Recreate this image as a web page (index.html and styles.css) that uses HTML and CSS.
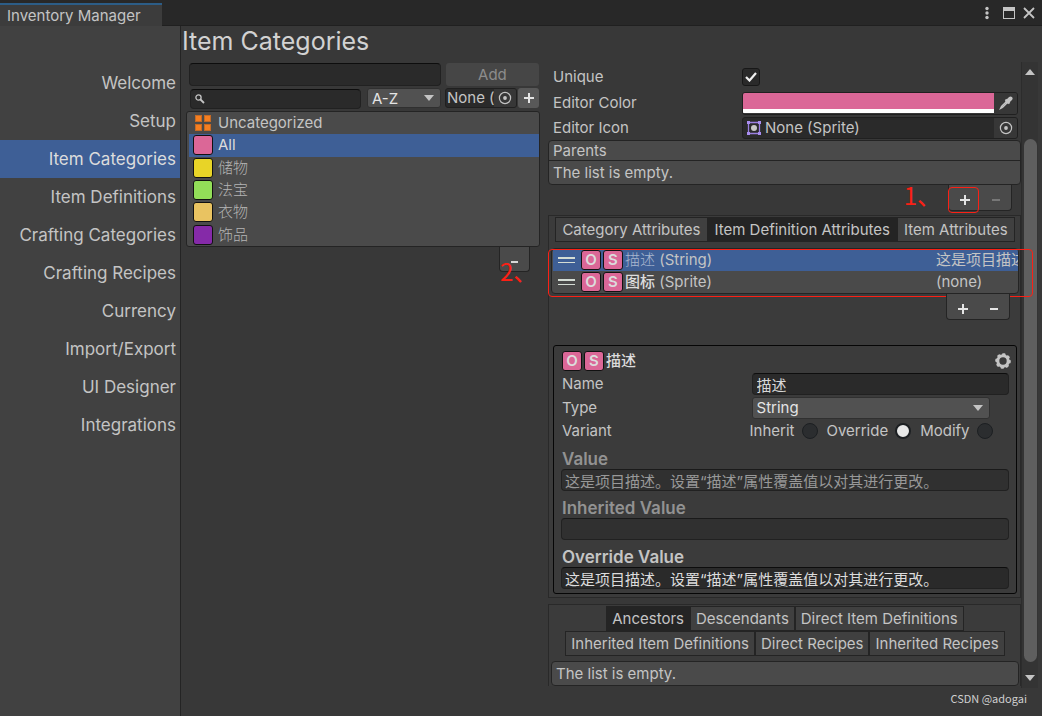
FILE: index.html
```html
<!DOCTYPE html>
<html lang="en">
<head>
<meta charset="utf-8">
<title>Inventory Manager</title>
<link rel="stylesheet" href="styles.css">
</head>
<body>
<header class="titlebar">
  <div class="window-tab">Inventory Manager</div>
  <div class="window-controls">
    <button class="icon-btn menu" aria-label="Menu"><svg width="6" height="14" viewBox="0 0 6 14"><g fill="#c4c4c4"><circle cx="3" cy="2.500" r="1.700"/><circle cx="3" cy="7" r="1.700"/><circle cx="3" cy="11.500" r="1.700"/></g></svg></button>
    <button class="icon-btn" aria-label="Maximize"><svg width="12" height="12" viewBox="0 0 12 12"><path d="M0 0h12v12H0zM1 4v7h10V4z" fill="#c4c4c4" fill-rule="evenodd"/></svg></button>
    <button class="icon-btn" aria-label="Close"><svg width="12" height="12" viewBox="0 0 12 12"><path d="M1 1l10 10M11 1L1 11" stroke="#c4c4c4" stroke-width="1.800"/></svg></button>
  </div>
</header>
<div class="body">
  <nav class="sidebar">
    <a href="#welcome">Welcome</a>
    <a href="#setup">Setup</a>
    <a href="#categories" class="active">Item Categories</a>
    <a href="#definitions">Item Definitions</a>
    <a href="#crafting-categories">Crafting Categories</a>
    <a href="#recipes">Crafting Recipes</a>
    <a href="#currency">Currency</a>
    <a href="#import">Import/Export</a>
    <a href="#ui">UI Designer</a>
    <a href="#integrations">Integrations</a>
  </nav>
  <main class="main">
    <h1>Item Categories</h1>
    <div class="columns">
      <section class="browser">
        <div class="add-row">
          <input class="field" type="text" aria-label="New category name">
          <button class="btn-add" disabled>Add</button>
        </div>
        <div class="search-row">
          <label class="search field">
            <svg width="10" height="10" viewBox="0 0 10 10"><circle cx="3.500" cy="3.500" r="2.600" fill="none" stroke="#c4c4c4" stroke-width="1.300"/><path d="M5.500 5.500L9 9" stroke="#c4c4c4" stroke-width="1.800"/></svg>
            <input type="search" aria-label="Search">
          </label>
          <div class="select"><select aria-label="Sort"><option>A-Z</option></select></div>
          <div class="object-field small"><span>None (</span><button class="picker" aria-label="Pick object"><svg width="14" height="14" viewBox="0 0 14 14"><circle cx="7" cy="7" r="5.600" fill="none" stroke="#c4c4c4" stroke-width="1.200"/><circle cx="7" cy="7" r="1.900" fill="#c4c4c4"/></svg></button></div>
          <button class="btn-plus" aria-label="Add filter"><svg width="10" height="10" viewBox="0 0 10 10"><path d="M5 0v10M0 5h10" stroke="#e4e4e4" stroke-width="2"/></svg></button>
        </div>
        <ul class="category-list">
          <li><button><svg class="grid-icon" width="16" height="16" viewBox="0 0 16 16"><path d="M0 0h7v7H0zM9 0h7v7H9zM0 9h7v7H0zM9 9h7v7H9z" fill="#c46a26"/><path d="M1 1h5v5H1zM10 1h5v5h-5zM1 10h5v5H1zM10 10h5v5h-5z" fill="#f57e20"/></svg>Uncategorized</button></li>
          <li class="selected"><button><i class="swatch pink"></i>All</button></li>
          <li class="dim"><button><i class="swatch yellow"></i>储物</button></li>
          <li class="dim"><button><i class="swatch green"></i>法宝</button></li>
          <li class="dim"><button><i class="swatch sand"></i>衣物</button></li>
          <li class="dim"><button><i class="swatch purple"></i>饰品</button></li>
        </ul>
        <div class="list-footer single">
          <button aria-label="Remove category"><svg width="10" height="10" viewBox="0 0 10 10"><path d="M1 5h7" stroke="#d8d8d8" stroke-width="2"/></svg></button>
          <span class="note note-two">2、</span>
        </div>
      </section>

      <section class="inspector">
        <div class="prop unique"><label for="unique">Unique</label><span class="check"><input id="unique" type="checkbox" checked><svg width="12" height="10" viewBox="0 0 12 10"><path d="M1 5l3.500 3.500L11 1" fill="none" stroke="#f0f0f0" stroke-width="2.200"/></svg></span></div>
        <div class="prop color"><label for="color">Editor Color</label><div class="color-field"><input id="color" type="color" value="#db6797"><button class="picker" aria-label="Eyedropper"><svg width="14" height="14" viewBox="0 0 14 14"><path d="M8 5L2.500 10.500 1.500 12.500 3.500 11.500 9 6" fill="none" stroke="#c4c4c4" stroke-width="1.300"/><path d="M6.500 3.500l4 4" stroke="#c4c4c4" stroke-width="2"/><path d="M8.500 5.500l3-3" stroke="#c4c4c4" stroke-width="4" stroke-linecap="round"/></svg></button></div></div>
        <div class="prop icon"><span>Editor Icon</span><div class="object-field"><svg class="sprite" width="14" height="14" viewBox="0 0 14 14"><path d="M1.500 1.500h11v11h-11z" fill="none" stroke="#9a7fe0" stroke-width="1.300"/><path d="M0 0h3v3H0zM11 0h3v3h-3zM0 11h3v3H0zM11 11h3v3h-3z" fill="#a98df0"/><circle cx="7" cy="7" r="3" fill="#c8c8c8"/></svg><span>None (Sprite)</span><button class="picker" aria-label="Pick sprite"><svg width="14" height="14" viewBox="0 0 14 14"><circle cx="7" cy="7" r="5.600" fill="none" stroke="#c4c4c4" stroke-width="1.200"/><circle cx="7" cy="7" r="1.900" fill="#c4c4c4"/></svg></button></div></div>
        <div class="list-box parents"><h2>Parents</h2><p>The list is empty.</p></div>
        <div class="list-footer">
          <button aria-label="Add parent"><svg width="12" height="12" viewBox="0 0 12 12"><path d="M6 1v10M1 6h10" stroke="#e4e4e4" stroke-width="2"/></svg></button>
          <button aria-label="Remove parent" disabled><svg width="12" height="12" viewBox="0 0 12 12"><path d="M2 6h8" stroke="#777" stroke-width="2"/></svg></button>
          <span class="note note-one">1、</span><span class="mark mark-plus"></span>
        </div>

        <div class="panel attributes">
          <div class="tabs">
            <button>Category Attributes</button><button class="on">Item Definition Attributes</button><button>Item Attributes</button>
          </div>
          <div class="attr-wrap">
            <ul class="attr-list">
              <li class="selected"><span class="handle"></span><b class="badge">O</b><b class="badge">S</b><span class="attr-name"><span class="faint">描述</span> (String)</span><span class="attr-value">这是项目描述</span></li>
              <li><span class="handle"></span><b class="badge">O</b><b class="badge">S</b><span class="attr-name"><strong>图标</strong> (Sprite)</span><span class="attr-value">(none)</span></li>
            </ul>
            <span class="mark mark-list"></span>
          </div>
          <div class="list-footer">
            <button aria-label="Add attribute"><svg width="12" height="12" viewBox="0 0 12 12"><path d="M6 1v10M1 6h10" stroke="#e4e4e4" stroke-width="2"/></svg></button>
            <button aria-label="Remove attribute"><svg width="12" height="12" viewBox="0 0 12 12"><path d="M2 6h8" stroke="#e4e4e4" stroke-width="2"/></svg></button>
          </div>
          <div class="detail">
            <div class="detail-head"><b class="badge">O</b><b class="badge">S</b><span class="detail-title">描述</span>
              <button class="icon-btn" aria-label="Options"><svg width="16" height="16" viewBox="0 0 16 16"><circle cx="8" cy="8" r="5.200" fill="none" stroke="#c4c4c4" stroke-width="3"/><circle cx="8" cy="8" r="6.600" fill="none" stroke="#c4c4c4" stroke-width="2.400" stroke-linecap="round" stroke-dasharray="1.200 3.983"/></svg></button></div>
            <div class="detail-row"><label for="name">Name</label><input id="name" class="field" type="text" value="描述"></div>
            <div class="detail-row type"><label for="type">Type</label><div class="select"><select id="type"><option>String</option></select></div></div>
            <div class="detail-row variant"><span>Variant</span><div class="radios"><label>Inherit<input type="radio" name="variant"></label><label>Override<input type="radio" name="variant" checked></label><label>Modify<input type="radio" name="variant"></label></div></div>
            <div class="value-group off"><label for="value">Value</label><input id="value" class="field" type="text" disabled value="这是项目描述。设置“描述”属性覆盖值以对其进行更改。"></div>
            <div class="value-group off"><label for="inherited">Inherited Value</label><input id="inherited" class="field" type="text" disabled></div>
            <div class="value-group"><label for="override">Override Value</label><input id="override" class="field" type="text" value="这是项目描述。设置“描述”属性覆盖值以对其进行更改。"></div>
          </div>
        </div>

        <div class="panel relations">
          <div class="tabs"><button class="on">Ancestors</button><button>Descendants</button><button>Direct Item Definitions</button></div>
          <div class="tabs"><button>Inherited Item Definitions</button><button>Direct Recipes</button><button>Inherited Recipes</button></div>
          <div class="list-box"><p>The list is empty.</p></div>
        </div>
      </section>

      <div class="scrollbar">
        <button aria-label="Scroll up"><svg width="10" height="6" viewBox="0 0 10 6"><path d="M5 0l5 6H0z" fill="#c4c4c4"/></svg></button>
        <div class="thumb"></div>
        <button aria-label="Scroll down"><svg width="10" height="6" viewBox="0 0 10 6"><path d="M5 6l5-6H0z" fill="#c4c4c4"/></svg></button>
      </div>
    </div>
    <footer class="credit">CSDN @adogai</footer>
  </main>
</div>
</body>
</html>
```

FILE: styles.css
```css
* { box-sizing: border-box; }
body {
  margin: 0;
  min-height: 100vh;
  display: flex;
  flex-direction: column;
  background: #383838;
  color: #c4c4c4;
  font: 15px/20px Inter, "Noto Sans CJK SC", sans-serif;
}
button, input, select { font: inherit; color: inherit; margin: 0; padding: 0; border: 0; background: none; min-width: 0; }
svg { display: block; flex: none; }
h1, h2, p, ul { margin: 0; padding: 0; font-weight: 400; }
ul { list-style: none; }

.titlebar { display: flex; justify-content: space-between; height: 26px; background: #282828; border-bottom: 1px solid #202020; padding-top: 3px; }
.window-tab { height: 23px; border-top: 2px solid #2c5d87; background: #3c3c3c; padding: 1px 21px 0 7px; }
.window-controls { display: flex; align-items: center; gap: 8px; padding: 0 7px 2px 0; }
.icon-btn { padding: 0; }
.menu { margin-right: 5px; }

.body { flex: 1; display: flex; }
.sidebar { width: 181px; flex: none; padding-top: 38px; background: #414141; border-right: 1px solid #242424; font-size: 17px; }
.sidebar a { display: block; height: 38px; line-height: 39px; padding-right: 4px; text-align: right; color: inherit; text-decoration: none; white-space: nowrap; }
.sidebar .active { background: #3e5f96; color: #dcdcdc; }

.main { flex: 1; min-width: 0; display: flex; flex-direction: column; }
h1 { height: 36px; line-height: 31px; font-size: 25px; padding-left: 1px; color: #d2d2d2; }
.columns { flex: 1; display: grid; grid-template-columns: minmax(0, 354fr) minmax(0, 481fr) 17px; padding: 0 4px 0 5px; }

.field { background: #2a2a2a; border: 1px solid #212121; border-top-color: #0d0d0d; border-radius: 4px; }
.add-row { display: flex; gap: 5px; padding: 1px 1px 0 3px; }
.add-row .field { flex: 252; height: 23px; }
.btn-add { flex: 94; height: 23px; background: #464646; border-radius: 3px; color: #8c8c8c; }
.search-row { display: flex; padding: 2px 1px 0 4px; height: 24px; margin-bottom: 1px; }
.search { flex: 1; min-width: 0; height: 20px; margin: 1px 6px 0 0; display: flex; align-items: center; gap: 4px; padding: 0 4px; }
.search input { flex: 1; outline: 0; }
.select { position: relative; height: 20px; background: #515151; border: 1px solid #303030; border-radius: 3px; color: #e4e4e4; }
.search-row .select { width: 74px; margin-right: 4px; }
.select select { appearance: none; width: 100%; height: 100%; padding-left: 4px; display: block; }
.select::after { content: ""; position: absolute; right: 6px; top: 50%; margin-top: -3px; border: 5px solid transparent; border-top: 6px solid #c4c4c4; border-bottom: 0; pointer-events: none; }
.object-field { display: flex; align-items: center; background: #2a2a2a; border: 1px solid #202020; border-radius: 3px; overflow: hidden; white-space: nowrap; }
.object-field > span { flex: 1; }
.object-field.small { width: 72px; height: 20px; margin-right: 1px; }
.object-field.small > span { overflow: hidden; padding-left: 1px; }
.picker { align-self: stretch; width: 22px; display: grid; place-items: center; background: #373737; flex: none; }
.btn-plus { width: 21px; height: 20px; background: #585858; border-radius: 3px; display: grid; place-items: center; }

.category-list { display: grid; grid-auto-rows: 1fr; height: 136px; background: #4a4a4a; border: 1px solid #242424; border-radius: 3px; padding-left: 2px; overflow: hidden; }
.category-list button { width: 100%; height: 100%; display: flex; align-items: center; gap: 5px; padding-left: 4px; text-align: left; }
.category-list .selected { background: #3e5f96; color: #dcdcdc; }
.dim { color: #b4b4b4; font-weight: 300; }
.grid-icon { margin: 0 2px; }
.swatch { width: 20px; height: 20px; border: 1px solid #111; border-radius: 3px; }
.pink { background: #db6797; }
.yellow { background: #e8d427; }
.green { background: #92de58; }
.sand { background: #e9c361; }
.purple { background: #852aa8; }

.list-footer { position: relative; width: 64px; height: 26px; margin: 0 9px 0 auto; display: flex; background: #4a4a4a; border: 1px solid #242424; border-top: 0; border-radius: 0 0 4px 4px; }
.list-footer button { flex: 1; display: grid; place-items: center; padding-top: 5px; }
.list-footer.single { width: 31px; height: 25px; margin-right: 10px; }
.note { position: absolute; color: #fb2015; font: 24px/24px "Noto Sans CJK SC", sans-serif; white-space: nowrap; }
.note-one { right: 70px; top: -2px; }
.note-two { left: 0; top: 12px; }
.mark { position: absolute; border: 1px solid #fb2015; border-radius: 4px; pointer-events: none; }
.mark-plus { left: -1px; top: 2px; width: 31px; height: 26px; }
.mark-list { left: -3px; right: -14px; top: 1px; bottom: -3px; }

.inspector { padding-left: 8px; }
.prop { display: grid; grid-template-columns: 189fr 276fr; padding: 0 3px 0 5px; align-items: center; }
.unique { height: 29px; }
.color { height: 24px; }
.icon { height: 25px; }
.check { position: relative; width: 18px; height: 18px; }
.check input { appearance: none; display: block; width: 18px; height: 18px; background: #2a2a2a; border: 1px solid #181818; border-radius: 3px; }
.check svg { position: absolute; left: 3px; top: 4px; pointer-events: none; }
.color-field { display: flex; height: 23px; border: 1px solid #202020; border-radius: 3px; overflow: hidden; }
.color-field input { appearance: none; flex: 1; height: 20px; border-bottom: 4px solid #fff; }
.color-field input::-webkit-color-swatch-wrapper { padding: 0; }
.color-field input::-webkit-color-swatch { border: 0; }
.color-field .picker, .icon .picker { width: 23px; }
.icon .object-field { height: 22px; }
.sprite { margin: 0 4px; }

.list-box { background: #4a4a4a; border: 1px solid #242424; border-radius: 4px; }
.list-box h2 { font-size: 15px; height: 20px; border-bottom: 1px solid #242424; padding-left: 4px; line-height: 20px; }
.list-box p { height: 23px; line-height: 23px; padding-left: 4px; }

.panel { border: 1px solid #292929; background: #3b3b3b; }
.attributes { margin-top: 4px; padding: 1px 1px 3px 2px; }
.tabs { display: flex; justify-content: center; }
.tabs button { height: 25px; padding: 0 5px; border: 1px solid #242424; white-space: nowrap; background: #404040; }
.attributes .tabs button { padding: 0 6px; }
.tabs .on { background: #242424; }
.attr-wrap { position: relative; margin-top: 6px; }
.attr-list { background: #4a4a4a; border: 1px solid #242424; border-radius: 4px; overflow: hidden; }
.attr-list li { display: flex; align-items: center; height: 22px; padding-left: 5px; white-space: nowrap; overflow: hidden; margin-left: 1px; }
.attr-list .selected { background: #3e5f96; }
.handle { width: 17px; height: 6px; border: 2px solid #d4dcd4; border-width: 2px 0 1px; margin-right: 6px; flex: none; }
.badge { flex: none; width: 20px; height: 20px; margin-right: 2px; border: 1px solid #111; border-radius: 3px; background: #db6797; color: #dcdcdc; text-align: center; line-height: 18px; font-weight: 600; }
.attr-name { flex: 1; }
.attr-value { flex: none; width: 82px; }
.faint { color: #a9b7cf; font-weight: 300; }
strong { font-weight: 500; color: #dcdcdc; }

.detail { margin: 25px 2px 0 2px; border: 1px solid #060606; border-radius: 3px; padding: 4px 7px; }
.detail-head { display: flex; align-items: center; height: 22px; padding-left: 1px; }
.detail-title { flex: 1; color: #dcdcdc; font-weight: 500; }
.detail-head .icon-btn { margin-right: -2px; }
.detail-row { display: grid; grid-template-columns: 190fr 258fr; align-items: center; height: 24px; padding-left: 1px; }
.detail-row .field { height: 22px; padding-left: 4px; color: #d8d8d8; }
.type .select { height: 22px; margin-right: 19px; }
.variant { height: 22px; }
.radios { display: flex; gap: 9px; white-space: nowrap; margin-left: -2px; }
.radios label { display: flex; align-items: center; gap: 7px; }
.radios input { appearance: none; width: 16px; height: 16px; border: 1px solid #1c1f22; border-radius: 50%; background: #2b2d2f; }
.radios input:checked { background: #e8e8e8; border-width: 2px; }
.value-group { display: flex; flex-direction: column; padding-top: 7px; font-weight: 600; }
.value-group label { font-size: 17px; line-height: 20px; padding-left: 1px; }
.value-group .field { height: 22px; padding-left: 3px; font-weight: 400; color: #dcdcdc; }
.off label { color: #929292; }
.off .field { background: #303030; border-top-color: #1a1a1a; color: #989898; }

.relations { margin-top: 6px; padding: 1px 1px 0 2px; border-bottom: 0; }
.relations .list-box { margin-top: 5px; }

.scrollbar { display: flex; flex-direction: column; background: #343434; border-left: 1px solid #2c2c2c; }
.scrollbar button { height: 20px; display: grid; place-items: center; }
.scrollbar .thumb { flex: 1; margin: 57px 1px 6px 2px; border-radius: 7px; background: #5f5f5f; }
.credit { height: 28px; padding-right: 15px; text-align: right; font: 11px/20px "Noto Sans CJK SC", sans-serif; color: #d0d0d0; }
```
